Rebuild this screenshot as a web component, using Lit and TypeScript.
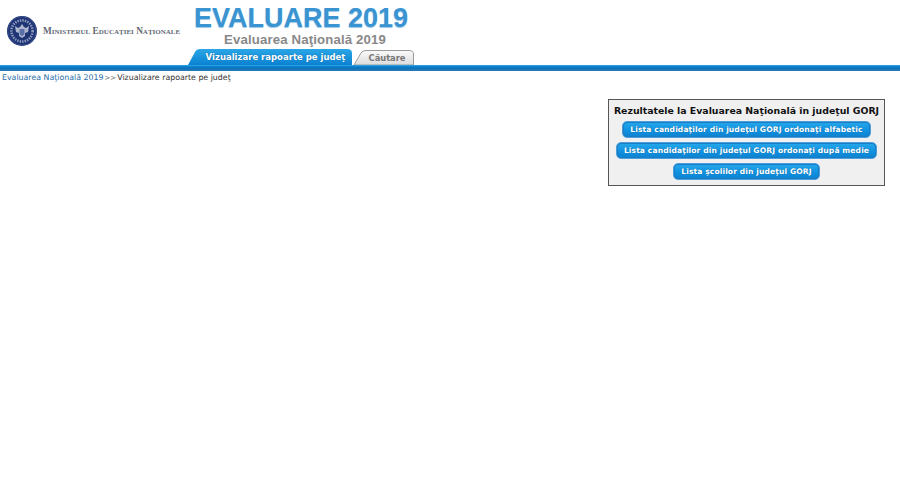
import { LitElement, html, css } from "lit";
import { customElement } from "lit/decorators.js";

@customElement("app-root")
export class AppRoot extends LitElement {
  static styles = css`
    :host { display: block; width: 900px; height: 502px; background: #fff; overflow: hidden; font-family: "DejaVu Sans", Verdana, sans-serif; color: #333; }
    .header { display: flex; height: 65px; }
    .logo { display: flex; align-items: center; width: 188px; height: 62px; padding-left: 7px; gap: 6px; box-sizing: border-box; }
    .logo svg { flex: none; }
    .min { font-family: "Liberation Serif", serif; font-size: 9.3px; font-variant: small-caps; color: #2c3444; white-space: nowrap; font-weight: 700; opacity: .75; }
    .mid { display: flex; flex-direction: column; width: 226px; }
    .t1 { font-family: "Liberation Sans", Arial, sans-serif; font-weight: 700; font-size: 27px; line-height: 30px; height: 30px; margin-top: 3px; padding-left: 6px; color: #3a94d2; text-shadow: 0 1px 1px #9cc6e4; white-space: nowrap; }
    .t2 { font-family: "Liberation Sans", Arial, sans-serif; font-weight: 700; font-size: 13.2px; line-height: 14px; height: 15px; padding-left: 36px; color: #888; white-space: nowrap; letter-spacing: .15px; }
    .tabs { display: flex; align-items: flex-end; height: 17px; }
    .tab { position: relative; display: flex; align-items: center; justify-content: center; font-weight: 700; white-space: nowrap; box-sizing: border-box; }
    .tab svg { position: absolute; inset: 0; width: 100%; height: 100%; }
    .tab span { position: relative; }
    .tab.on { width: 165px; height: 16px; color: #fff; font-size: 8.5px; padding-left: 10px; text-shadow: 0 0 1px #0a5f9a; }
    .tab.off { width: 61px; height: 15px; color: #777; font-size: 8.3px; padding-left: 7px; }
    .bar { height: 6px; box-sizing: border-box; background: linear-gradient(#0d85d2, #0b6fb6); border-bottom: 2px solid #1f78b8; border-top: 1px solid #2a9de0; }
    .crumb { display: flex; gap: 1px; font-size: 7.85px; line-height: 12px; padding: 1px 0 0 2px; height: 28px; align-items: flex-start; box-sizing: border-box; }
    .crumb a { color: #2a6ea8; }
    .sep { font-size: 7px; color: #666; letter-spacing: 0; }
    .main { display: flex; justify-content: flex-end; padding-right: 15px; }
    .panel { width: 277px; height: 87px; box-sizing: border-box; border: 1px solid #555; background: #f0f0f0; display: flex; flex-direction: column; align-items: center; padding-top: 4px; }
    .panel h3 { margin: 0; font-size: 9.35px; line-height: 14px; font-weight: 700; color: #111; white-space: nowrap; }
    .btns { display: flex; flex-direction: column; align-items: center; gap: 4px; margin-top: 3px; }
    .btn { height: 17px; box-sizing: border-box; border-radius: 5px; border: 1px solid #4a9fdc; background: linear-gradient(#26a8ec, #1092e0 55%, #0c82d0); color: #fff; font-size: 7.6px; font-weight: 700; line-height: 15px; padding: 0 7px; white-space: nowrap; letter-spacing: .1px; text-shadow: 0 0 1px #0a5f9a; box-shadow: inset 0 0 0 1px #1a7cc4; }
  `;

  render() {
    return html`
      <div class="header">
        <div class="logo">
          <svg width="30" height="30" viewBox="0 0 30 30">
            <circle cx="15" cy="15" r="15" fill="#1f3372"/>
            <circle cx="15" cy="15" r="14.2" fill="none" stroke="#3d5596" stroke-width=".8"/>
            <circle cx="15" cy="15" r="10.6" fill="none" stroke="#8f9dc4" stroke-width="2.6" stroke-dasharray="1.4 1.1"/>
            <circle cx="15" cy="15" r="8" fill="#203674"/>
            <path d="M8 10l3 2 2-1 2-3 2 3 2 1 3-2-1 6-3 1v3l-3 2-3-2v-3l-3-1z" fill="#aeb6cf"/>
            <path d="M12.6 13h4.8v5.2l-2.4 2-2.4-2z" fill="#5a6ea8"/>
          </svg>
          <span class="min">Ministerul Educaţiei Naţionale</span>
        </div>
        <div class="mid">
          <div class="t1">EVALUARE 2019</div>
          <div class="t2">Evaluarea Naţională 2019</div>
          <div class="tabs">
            <div class="tab on">
              <svg viewBox="0 0 165 16" preserveAspectRatio="none">
                <defs><linearGradient id="a" x1="0" y1="0" x2="0" y2="1"><stop offset="0" stop-color="#2aa6e6"/><stop offset="1" stop-color="#0b82d2"/></linearGradient></defs>
                <path d="M0 16 L7 3 Q8.5 0 12 0 H159 Q164 0 164 4 V16 Z" fill="url(#a)"/>
              </svg>
              <span>Vizualizare rapoarte pe judeţ</span>
            </div>
            <div class="tab off">
              <svg viewBox="0 0 61 15" preserveAspectRatio="none">
                <defs><linearGradient id="b" x1="0" y1="0" x2="0" y2="1"><stop offset="0" stop-color="#fafafa"/><stop offset="1" stop-color="#dcdcdc"/></linearGradient></defs>
                <path d="M1 15 L8 3 Q9.5 .5 13 .5 H56 Q60.5 .5 60.5 4 V15 Z" fill="url(#b)" stroke="#9a9a9a"/>
              </svg>
              <span>Căutare</span>
            </div>
          </div>
        </div>
      </div>
      <div class="bar"></div>
      <div class="crumb"><a>Evaluarea Naţională 2019</a><span class="sep">&gt;&gt;</span><span>Vizualizare rapoarte pe judeţ</span></div>
      <div class="main">
        <div class="panel">
          <h3>Rezultatele la Evaluarea Naţională în judeţul GORJ</h3>
          <div class="btns">
            <div class="btn">Lista candidaţilor din judeţul GORJ ordonaţi alfabetic</div>
            <div class="btn">Lista candidaţilor din judeţul GORJ ordonaţi după medie</div>
            <div class="btn">Lista şcolilor din judeţul GORJ</div>
          </div>
        </div>
      </div>
    `;
  }
}
